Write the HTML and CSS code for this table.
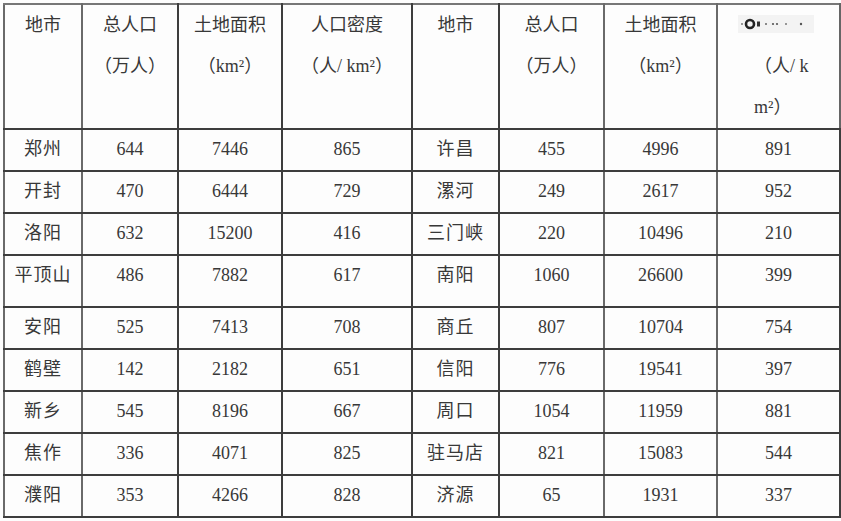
FILE: index.html
```html
<!DOCTYPE html>
<html lang="zh">
<head>
<meta charset="utf-8">
<title>河南省各地市人口与面积</title>
<link rel="stylesheet" href="styles.css">
</head>
<body>
<div class="sheet">
<table class="grid">
  <colgroup>
    <col class="c1"><col class="c2"><col class="c3"><col class="c4">
    <col class="c5"><col class="c6"><col class="c7"><col class="c8">
  </colgroup>
  <thead>
    <tr class="head">
      <th class="dot">地市</th>
      <th class="dot">总人口<br>（万人）</th>
      <th>土地面积<br>（km²）</th>
      <th>人口密度<br>（人/ km²）</th>
      <th>地市</th>
      <th class="dot">总人口<br>（万人）</th>
      <th class="dot">土地面积<br>（km²）</th>
      <th class="last"><span class="blot"><svg width="76" height="18" viewBox="0 0 76 18"><rect x="0" y="0" width="76" height="18" fill="#f3f3f3"/><circle cx="12" cy="9" r="4" fill="none" stroke="#222" stroke-width="2.6"/><circle cx="4" cy="9" r="1" fill="#777"/><rect x="19" y="6.5" width="3" height="5" fill="#333"/><circle cx="28" cy="9" r="1" fill="#666"/><circle cx="35" cy="9" r="1.1" fill="#555"/><circle cx="39" cy="9" r="1.1" fill="#555"/><circle cx="48" cy="9" r="1" fill="#777"/><circle cx="63" cy="9" r="1.2" fill="#555"/></svg></span><br>（人/ k<br>m²）</th>
    </tr>
  </thead>
  <tbody>
    <tr><td class="dot">郑州</td><td class="dot">644</td><td>7446</td><td>865</td><td>许昌</td><td class="dot">455</td><td class="dot">4996</td><td>891</td></tr>
    <tr><td class="dot">开封</td><td class="dot">470</td><td>6444</td><td>729</td><td>漯河</td><td class="dot">249</td><td class="dot">2617</td><td>952</td></tr>
    <tr><td class="dot">洛阳</td><td class="dot">632</td><td>15200</td><td>416</td><td>三门峡</td><td class="dot">220</td><td class="dot">10496</td><td>210</td></tr>
    <tr class="tall"><td class="dot">平顶山</td><td class="dot">486</td><td>7882</td><td>617</td><td>南阳</td><td class="dot">1060</td><td class="dot">26600</td><td>399</td></tr>
    <tr><td class="dot">安阳</td><td class="dot">525</td><td>7413</td><td>708</td><td>商丘</td><td class="dot">807</td><td class="dot">10704</td><td>754</td></tr>
    <tr><td class="dot">鹤壁</td><td class="dot">142</td><td>2182</td><td>651</td><td>信阳</td><td class="dot">776</td><td class="dot">19541</td><td>397</td></tr>
    <tr><td class="dot">新乡</td><td class="dot">545</td><td>8196</td><td>667</td><td>周口</td><td class="dot">1054</td><td class="dot">11959</td><td>881</td></tr>
    <tr><td class="dot">焦作</td><td class="dot">336</td><td>4071</td><td>825</td><td>驻马店</td><td class="dot">821</td><td class="dot">15083</td><td>544</td></tr>
    <tr><td class="dot">濮阳</td><td class="dot">353</td><td>4266</td><td>828</td><td>济源</td><td class="dot">65</td><td class="dot">1931</td><td>337</td></tr>
  </tbody>
</table>
</div>
</body>
</html>
```

FILE: styles.css
```css
html, body {
  margin: 0;
  padding: 0;
  background: #fdfdfd;
}

.sheet {
  padding: 3px 0 0 3px;
}

.grid {
  border-collapse: collapse;
  table-layout: fixed;
  width: 836px;
  font-family: "Liberation Serif", "Noto Sans CJK SC", serif;
  font-size: 18px;
  color: #383838;
  border: 2px solid #666;
}

.c1 { width: 78px; }
.c2 { width: 96px; }
.c3 { width: 104px; }
.c4 { width: 130px; }
.c5 { width: 87px; }
.c6 { width: 105px; }
.c7 { width: 113px; }
.c8 { width: 123px; }

.grid th,
.grid td {
  border: 2px solid #3d3d3d;
  padding: 0;
  text-align: center;
  vertical-align: top;
  white-space: nowrap;
  overflow: hidden;
}

.grid th {
  font-weight: normal;
  line-height: 41px;
  height: 120px;
}

.grid td {
  line-height: 38px;
  height: 40px;
}

.grid td:first-child,
.grid td:nth-child(5) {
  letter-spacing: 1px;
}

.grid .tall td {
  height: 50px;
}

.grid th.last {
  text-align: left;
  padding-left: 36px;
  border-right-color: #666;
}

.blot {
  display: inline-block;
  vertical-align: top;
  margin: 10px 0 0 -16px;
  line-height: 0;
}

.grid th:first-child,
.grid td:first-child {
  border-left-color: #6a6a6a;
}

.grid th:nth-child(1),
.grid td:nth-child(1),
.grid th:nth-child(6),
.grid td:nth-child(6),
.grid th:nth-child(7),
.grid td:nth-child(7) {
  border-right-color: #6a6a6a;
}

.grid thead th {
  border-top-color: #777;
}
```
